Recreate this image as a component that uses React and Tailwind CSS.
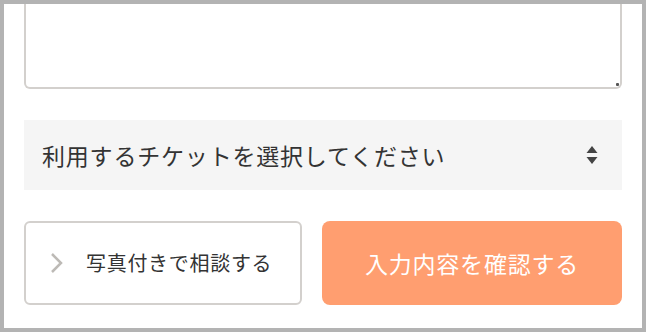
export default function App() {
  return (
    <div className="w-[646px] h-[332px] border-4 border-[#b3b3b3] bg-white overflow-hidden" style={{ fontFamily: '"Noto Sans CJK JP", "Noto Sans", sans-serif' }}>
      <div className="px-5 flex flex-col">
        <div className="relative">
          <textarea className="block w-full h-[85px] border-2 border-t-0 border-[#d3d0cd] rounded-b-[6px] bg-white resize-none outline-none" />
          <span className="absolute right-[3px] bottom-[3px] w-[3px] h-[3px] bg-[#555] rounded-[1px]" />
        </div>
        <div className="mt-[31px] h-[70px] bg-[#f5f5f5] flex items-center pl-[18px] pr-6 justify-between">
          <span className="text-[23px] tracking-[0.035em] text-[#333]">利用するチケットを選択してください</span>
          <svg width="12" height="20" viewBox="0 0 12 20" className="text-[#444]">
            <path d="M6 1 L11.5 8 H0.5 Z" fill="currentColor" />
            <path d="M6 19 L11.5 12 H0.5 Z" fill="currentColor" />
          </svg>
        </div>
        <div className="mt-[31px] flex gap-5 h-[84px]">
          <button className="w-[278px] h-full border-2 border-[#d3d0cd] rounded-[6px] bg-white flex items-center pl-6">
            <svg width="14" height="22" viewBox="0 0 14 22" className="text-[#bdbab6]">
              <path d="M2 2 L11 11 L2 20" fill="none" stroke="currentColor" strokeWidth="2.5" />
            </svg>
            <span className="ml-[22px] text-[20px] tracking-[0.035em] text-[#333]">写真付きで相談する</span>
          </button>
          <button className="flex-1 h-full rounded-[8px] bg-[#ff9e70] flex items-center justify-center">
            <span className="text-[23px] tracking-[0.035em] text-white">入力内容を確認する</span>
          </button>
        </div>
      </div>
    </div>
  );
}
